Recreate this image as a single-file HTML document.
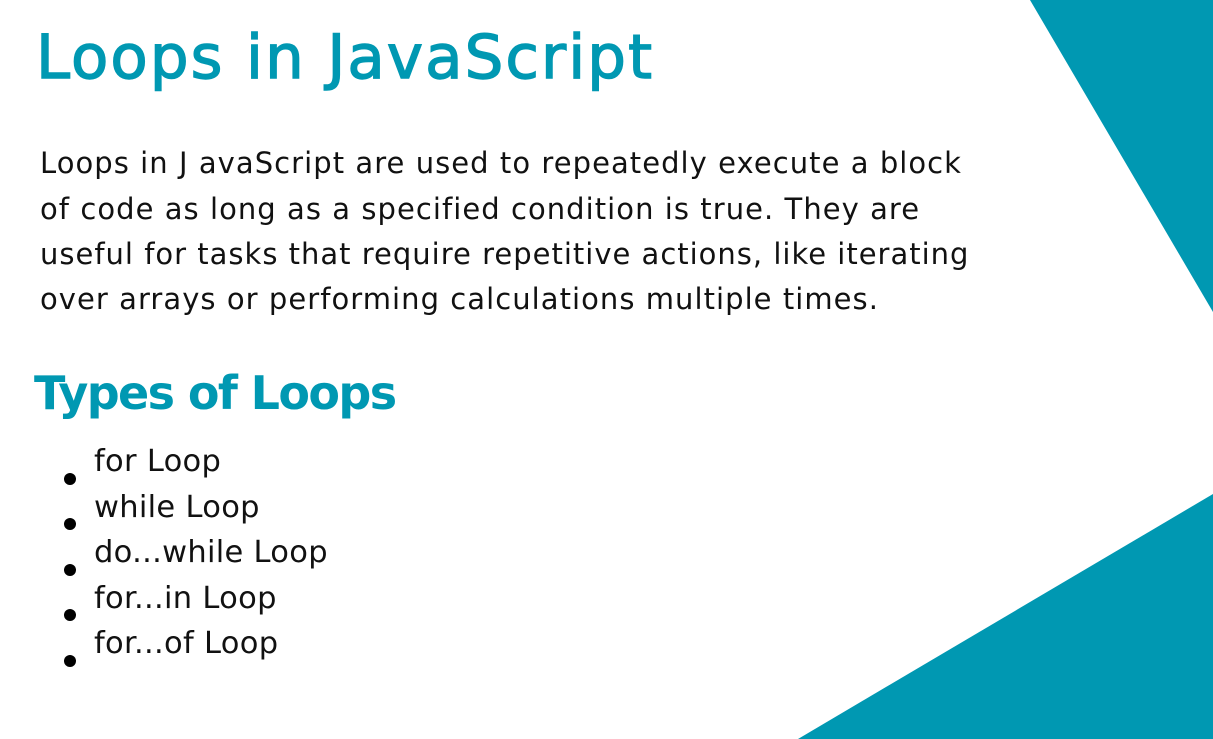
<!DOCTYPE html>
<html><head><meta charset="utf-8"><style>
html,body{margin:0;padding:0;background:#fff;width:1213px;height:739px;overflow:hidden;position:relative;font-family:"DejaVu Sans","Liberation Sans",sans-serif;}
.a{position:absolute;white-space:nowrap;}
h1{position:absolute;margin:0;left:36px;top:22px;font-size:61px;font-weight:normal;color:#0098b2;white-space:nowrap;letter-spacing:2.1px;-webkit-text-stroke:1.4px #0098b2;}
.p{font-size:29px;color:#111;left:40px;line-height:45px;letter-spacing:1.05px}
h2{position:absolute;margin:0;left:34px;top:366px;font-size:46px;font-weight:bold;color:#0098b2;letter-spacing:-1.6px;white-space:nowrap;}
.li{font-size:30.5px;color:#111;left:94px;letter-spacing:0.3px}
.b{position:absolute;left:64px;width:12px;height:12px;border-radius:50%;background:#000;}
</style></head><body>
<svg class="a" style="left:0;top:0" width="1213" height="739">
<polygon points="1030,0 1213,0 1213,312" fill="#0098b2"/>
<polygon points="798,739 1213,494 1213,739" fill="#0098b2"/>
</svg>
<h1>Loops in JavaScript</h1>
<div class="a p" style="top:141px">Loops in J avaScript are used to repeatedly execute a block</div>
<div class="a p" style="top:187px">of code as long as a specified condition is true. They are</div>
<div class="a p" style="top:232px;letter-spacing:1px">useful for tasks that require repetitive actions, like iterating</div>
<div class="a p" style="top:277px">over arrays or performing calculations multiple times.</div>
<h2>Types of Loops</h2>
<div class="a li" style="top:444px">for Loop</div>
<div class="a li" style="top:490px">while Loop</div>
<div class="a li" style="top:535px">do...while Loop</div>
<div class="a li" style="top:581px">for...in Loop</div>
<div class="a li" style="top:626px">for...of Loop</div>
<div class="b" style="top:473px"></div>
<div class="b" style="top:518px"></div>
<div class="b" style="top:564px"></div>
<div class="b" style="top:609px"></div>
<div class="b" style="top:655px"></div>
</body></html>
